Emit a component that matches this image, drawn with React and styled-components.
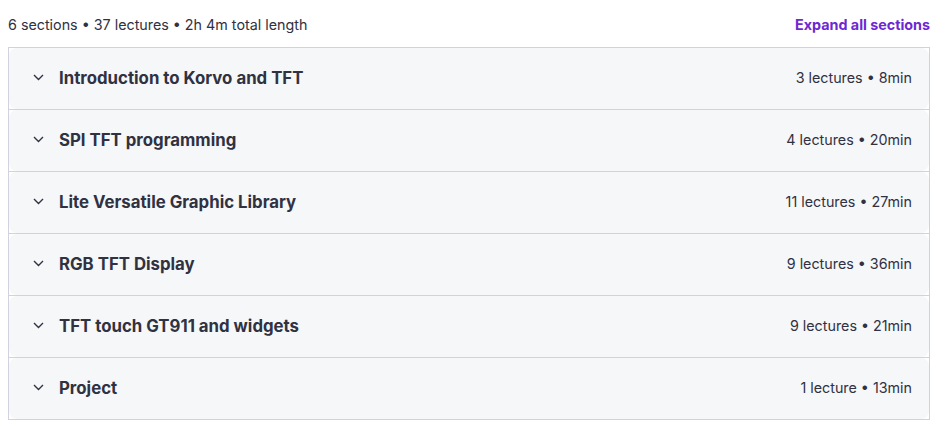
import React from 'react';
import styled, { createGlobalStyle } from 'styled-components';

const GlobalStyle = createGlobalStyle`
  body {
    margin: 8px;
    font-family: Inter, "Noto Sans", sans-serif;
    color: #303141;
    background: #fff;
  }
`;

const Wrapper = styled.div`
  width: 922px;
`;

const TopBar = styled.div`
  display: flex;
  justify-content: space-between;
  align-items: center;
  height: 32px;
  margin-bottom: 7px;
`;

const Summary = styled.span`
  font-size: 14.3px;
  color: #303141;
`;

const ExpandLink = styled.button`
  background: none;
  border: none;
  padding: 0;
  font-family: inherit;
  font-size: 14.3px;
  font-weight: 700;
  color: #6d28d2;
  cursor: pointer;
`;

const Panel = styled.div`
  border: 1px solid #d1d2e0;
  background: #fff;
`;

const Section = styled.div`
  border-bottom: ${p => (p.last ? 'none' : '1px solid #d1d2e0')};
`;

const SectionHead = styled.div`
  display: flex;
  align-items: center;
  height: 61px;
  padding: 0 17px 2px 24px;
  box-sizing: border-box;
  background: #f6f7f9;
  border-radius: 8px;
  cursor: pointer;
`;

const Chevron = styled.svg`
  width: 11px;
  height: 7px;
  margin-right: 15px;
  flex-shrink: 0;
`;

const SectionTitle = styled.span`
  flex: 1;
  font-size: 16.8px;
  font-weight: 700;
  color: #303141;
`;

const SectionMeta = styled.span`
  font-size: 14.3px;
  color: #303141;
`;

const sections = [
  { title: 'Introduction to Korvo and TFT', meta: '3 lectures • 8min' },
  { title: 'SPI TFT programming', meta: '4 lectures • 20min' },
  { title: 'Lite Versatile Graphic Library', meta: '11 lectures • 27min' },
  { title: 'RGB TFT Display', meta: '9 lectures • 36min' },
  { title: 'TFT touch GT911 and widgets', meta: '9 lectures • 21min' },
  { title: 'Project', meta: '1 lecture • 13min' },
];

const App = () => (
  <>
    <GlobalStyle />
    <Wrapper>
      <TopBar>
        <Summary>6 sections • 37 lectures • 2h 4m total length</Summary>
        <ExpandLink>Expand all sections</ExpandLink>
      </TopBar>
      <Panel>
        {sections.map((s, i) => (
          <Section key={s.title} last={i === sections.length - 1}>
            <SectionHead>
              <Chevron viewBox="0 0 11 7">
                <path d="M1 1l4.5 4.5L10 1" fill="none" stroke="#303141" strokeWidth="1.4" />
              </Chevron>
              <SectionTitle>{s.title}</SectionTitle>
              <SectionMeta>{s.meta}</SectionMeta>
            </SectionHead>
          </Section>
        ))}
      </Panel>
    </Wrapper>
  </>
);

export default App;
